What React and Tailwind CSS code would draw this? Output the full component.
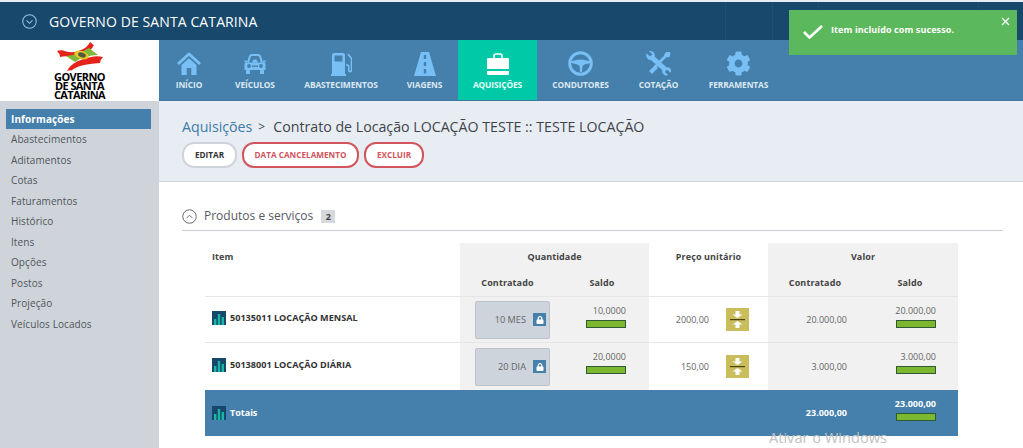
import React from "react";
import { FaCog, FaLock } from "react-icons/fa";

const ICON = "#78bff5";

function Home() {
  return (
    <svg width="24" height="24" viewBox="0 0 24 24">
      <path d="M1 12 12 2l11 10" fill="none" stroke={ICON} strokeWidth="3" strokeLinejoin="round" />
      <path d="M4.5 13 12 6.2 19.5 13v10h-5.2v-7H9.7v7H4.5z" fill={ICON} />
    </svg>
  );
}
function Car() {
  return (
    <svg width="24" height="22" viewBox="0 0 24 22">
      <path d="M5 9.5 7 3.2C7.3 2.4 8 2 9 2h6c1 0 1.7.4 2 1.2l2 6.3" fill="none" stroke={ICON} strokeWidth="2" />
      <path d="M9 9.5 10.5 6.5h3L15 9.5z" fill={ICON} />
      <path d="M0.5 7.5h3l1 2H4.2L2.6 9.5zM23.5 7.5h-3l-1 2h.3l1.6 0z" fill={ICON} />
      <path d="M3 9.5h18c1 0 1.5.7 1.5 1.5v6H1.5v-6c0-.8.5-1.5 1.5-1.5z" fill={ICON} />
      <circle cx="6" cy="13" r="1.9" fill="#457fab" />
      <circle cx="18" cy="13" r="1.9" fill="#457fab" />
      <rect x="9" y="12.5" width="6" height="1.4" fill="#457fab" />
      <rect x="3" y="17" width="4" height="4" rx=".6" fill={ICON} />
      <rect x="17" y="17" width="4" height="4" rx=".6" fill={ICON} />
    </svg>
  );
}
function Gas() {
  return (
    <svg width="21" height="24" viewBox="0 0 21 24">
      <path d="M1 22V3a2 2 0 0 1 2-2h9a2 2 0 0 1 2 2v19zM0 22h15v2H0z" fill={ICON} />
      <rect x="3.5" y="3.5" width="8" height="6" fill="#457fab" />
      <path d="M15 13h1.5a1.2 1.2 0 0 1 1.2 1.2v4a1.4 1.4 0 0 0 2.8 0V6.5L17 2" fill="none" stroke={ICON} strokeWidth="1.6" />
    </svg>
  );
}
function Tools() {
  return (
    <svg width="25" height="25" viewBox="0 0 25 25">
      <path d="M22 2.5 9 16" stroke={ICON} strokeWidth="2.6" fill="none" />
      <path d="M20 1h3.5l1 1-1 4-2.5.6-2.8-2.8z" fill={ICON} />
      <path d="M10.5 15.5 4.5 21.5" stroke={ICON} strokeWidth="4" />
      <path d="M0.6 2.2 4.2 5.6 6.4 3.2 3 .2C6.5-.6 9.5 2 8.8 5.8l12 10.6c3.5-.6 5.2 3.2 3.8 5.4l-3.6-3.2-2.2 2.4 3.4 3.1c-3.4 1.2-6.7-1.4-6-5.2L4.6 8.8C1.8 9.5-.6 6 .6 2.2z" fill={ICON} />
    </svg>
  );
}
function Road() {
  return (
    <svg width="24" height="24" viewBox="0 0 24 24">
      <path d="M8 0h8l7 24H1z" fill={ICON} />
      <rect x="10.8" y="3" width="2.4" height="4" fill="#457fab" />
      <rect x="10.8" y="10" width="2.4" height="4" fill="#457fab" />
      <rect x="10.8" y="17" width="2.4" height="4.5" fill="#457fab" />
    </svg>
  );
}
function Bag() {
  return (
    <svg width="24" height="24" viewBox="0 0 24 24">
      <path d="M8 6V4a2 2 0 0 1 2-2h4a2 2 0 0 1 2 2v2" fill="none" stroke="#fff" strokeWidth="1.6" />
      <path d="M2 6h20a1 1 0 0 1 1 1v10H1V7a1 1 0 0 1 1-1z" fill="#fff" />
      <path d="M1 19h22v3a1 1 0 0 1-1 1H2a1 1 0 0 1-1-1z" fill="#fff" />
    </svg>
  );
}
function Wheel() {
  return (
    <svg width="25" height="25" viewBox="0 0 25 25">
      <circle cx="12.5" cy="12.5" r="10.8" fill="none" stroke={ICON} strokeWidth="3" />
      <path d="M2.5 10.5c6-2.4 14-2.4 20 0v1.5l-6 1.5-2 1.5-.5 6h-2l-.5-6-2-1.5-6-1.5z" fill={ICON} />
    </svg>
  );
}
function Chart() {
  return (
    <svg width="14" height="14" viewBox="0 0 14 14" className="shrink-0">
      <rect width="14" height="14" fill="#17486b" />
      <rect x="2" y="8" width="2.4" height="6" fill="#19b5a5" />
      <rect x="5.8" y="3" width="2.4" height="11" fill="#19b5a5" />
      <rect x="9.6" y="6" width="2.4" height="8" fill="#19b5a5" />
    </svg>
  );
}
function Logo() {
  return (
    <svg width="46" height="29" viewBox="0 0 46 29">
      <path d="M0 9 Q4 7.5 9 9.5 Q17 11.5 24 8 Q31 5 33 0 L35 1.5 Q36 3 37 3 Q34 9 27 12.5 Q20 15.5 12 14.5 Q7 14 3 15 Q3 11.5 0 9Z" fill="#e5231b" />
      <path d="M46 15 Q42 14 37 14.5 Q28 15.5 20 19.5 Q13 23 10 29 Q13 28 14.5 28.5 Q19 24.5 27 23 Q35 21.5 43 21 Q43 18 46 15Z" fill="#e5231b" />
      <path d="M9 14 Q20 13 32 6 L41 13 Q28 13 18 20 Z" fill="#7fb83a" />
      <ellipse cx="24.5" cy="13" rx="7.5" ry="4" fill="#e8c52a" transform="rotate(18 24.5 13)" />
      <ellipse cx="25" cy="13" rx="4" ry="2.4" fill="#4f5a3a" transform="rotate(18 25 13)" />
    </svg>
  );
}
function Bar() {
  return <div className="w-[40px] h-[8px] bg-[#7cb82f] border border-[#2f5a35]" />;
}
function QtyBox({ text }) {
  return (
    <div className="w-[75px] h-[38px] bg-[#ced4dc] border border-[#bcc3cb] rounded-[2px] flex items-center justify-end gap-[7px] pr-[3px] text-[9.2px] text-[#666]">
      <span>{text}</span>
      <span className="w-[13px] h-[13px] bg-[#457fab] flex items-center justify-center text-white">
        <FaLock size={8} />
      </span>
    </div>
  );
}
function Split() {
  return (
    <div className="w-[23px] h-[23px] bg-[#c9bd5c] flex flex-col items-center justify-center">
      <svg width="23" height="23" viewBox="0 0 23 23">
        <path d="M9.5 3h4v3.4h3L11.5 10l-5-3.6h3z" fill="#fff" />
        <rect x="4" y="11" width="15" height="1.2" fill="#4a4410" />
        <path d="M9.5 20h4v-3.4h3L11.5 13l-5 3.6h3z" fill="#fff" />
      </svg>
    </div>
  );
}

const navItems = [
  ["INÍCIO", <Home />, "w-[60px]"],
  ["VEÍCULOS", <Car />, "w-[72px]"],
  ["ABASTECIMENTOS", <Gas />, "w-[100px]"],
  ["VIAGENS", <Road />, "w-[67px]"],
  ["AQUISIÇÕES", <Bag />, "w-[79px]"],
  ["CONDUTORES", <Wheel />, "w-[87px]"],
  ["COTAÇÃO", <Tools />, "w-[69px]"],
  ["FERRAMENTAS", <FaCog size={25} />, "w-[91px]"],
];
const side = ["Abastecimentos", "Aditamentos", "Cotas", "Faturamentos", "Histórico", "Itens", "Opções", "Postos", "Projeção", "Veículos Locados"];

export default function App() {
  return (
    <div className="relative w-[1023px] h-[448px] overflow-hidden bg-white flex flex-col font-['Open_Sans',sans-serif]">
      <div className="h-[2px] bg-[#e9eef3] shrink-0" />
      <header className="h-[38px] shrink-0 bg-[#18486b] flex items-center pl-[22px] gap-[12px] relative">
        <svg width="15" height="15" viewBox="0 0 16 16" fill="none" stroke="#8fc4ee" strokeWidth="1.1">
          <circle cx="8" cy="8" r="7.2" />
          <path d="M4.8 6.8 8 10l3.2-3.2" />
        </svg>
        <span className="text-white text-[14px] tracking-[0.1px]">GOVERNO DE SANTA CATARINA</span>
        <div className="ml-auto flex h-full mr-[44px]">
          <div className="w-[47px] border-l border-[#234f71]" />
          <div className="w-[46px] border-l border-[#234f71]" />
          <div className="w-[161px] border-l border-[#234f71] border-r" />
        </div>
      </header>
      <div className="h-[61px] shrink-0 flex">
        <div className="w-[159px] bg-white flex flex-col items-center pt-[2px]">
          <Logo />
          <div className="text-black font-bold text-[11px] leading-[9px] text-center tracking-[-0.6px] mt-[1px]">
            GOVERNO<br />DE SANTA<br />CATARINA
          </div>
        </div>
        <nav className="flex-1 bg-[#457fab] flex border-b border-[#3f769f]">
          {navItems.map(([label, icon, w]) => {
            const active = label === "AQUISIÇÕES";
            return (
              <div key={label} className={`${w} flex flex-col items-center pt-[10px] ${active ? "bg-[#00c9a7] text-white" : "text-[#78bff5]"}`}>
                <div className="h-[27px] flex items-center justify-center">{icon}</div>
                <span className={`mt-[2px] text-[8.4px] font-bold tracking-[-0.1px] whitespace-nowrap ${active ? "text-[#e6fffa]" : "text-[#dbe8f2]"}`}>{label}</span>
              </div>
            );
          })}
        </nav>
      </div>
      <div className="flex-1 flex min-h-0">
        <aside className="w-[159px] shrink-0 bg-[#ced4da] pt-[8px] pl-[6px]">
          <div className="w-[145px] h-[20px] bg-[#457fab] text-white font-bold text-[10px] pl-[5px] flex items-center tracking-[0.1px]">Informações</div>
          <ul className="mt-[0.5px] pl-[5px]">
            {side.map((s) => (
              <li key={s} className="h-[20.5px] flex items-center text-[10px] text-[#4f555b] tracking-[0.08px]">{s}</li>
            ))}
          </ul>
        </aside>
        <main className="flex-1 min-w-0 flex flex-col">
          <div className="h-[81px] shrink-0 bg-[#e8edf4] border-b border-[#cfd4da] pl-[23px] pt-[16px]">
            <div className="flex items-center gap-[5px] text-[14.2px] leading-[20px] text-[#3f444a]">
              <span className="text-[#3d7ba8]">Aquisições</span>
              <span className="text-[12px] ml-[1px] mr-[3px]">&gt;</span>
              <span>Contrato de Locação LOCAÇÃO TESTE :: TESTE LOCAÇÃO</span>
            </div>
            <div className="flex gap-[5px] mt-[5px]">
              <div className="h-[26px] w-[55px] rounded-[12px] bg-white border-2 border-[#cfd4da] flex items-center justify-center text-[8.2px] font-bold text-[#333]">EDITAR</div>
              <div className="h-[26px] w-[117px] rounded-[12px] bg-white border-2 border-[#d2555d] flex items-center justify-center text-[8.2px] font-bold text-[#d2555d]">DATA CANCELAMENTO</div>
              <div className="h-[26px] w-[60px] rounded-[12px] bg-white border-2 border-[#d2555d] flex items-center justify-center text-[8.2px] font-bold text-[#d2555d]">EXCLUIR</div>
            </div>
          </div>
          <div className="pl-[23px] pr-[20px]">
            <div className="h-[49px] border-b border-[#c9ced3] flex items-end pb-[6px] gap-[7px]">
              <svg width="15" height="15" viewBox="0 0 16 16" fill="none" stroke="#5c6268" strokeWidth="1">
                <circle cx="8" cy="8" r="7.2" />
                <path d="M4.8 9.8 8 6.6l3.2 3.2" />
              </svg>
              <span className="text-[12px] leading-[16px] text-[#555b61]">Produtos e serviços</span>
              <span className="ml-[1px] w-[14px] h-[13px] mb-[1px] bg-[#d5d9dd] text-[9px] font-bold text-[#444] flex items-center justify-center">2</span>
            </div>
          </div>
          <div className="ml-[46px] mt-[12px] w-[753px] text-[9px]">
            <div className="grid grid-cols-[255px_95px_94px_119px_94px_96px] grid-rows-[27px_26px] border-b border-[#e4e6e8] font-bold text-[#444] text-[9px] tracking-[0.1px]">
              <div className="pl-[7px] pt-[7px]">Item</div>
              <div className="col-span-2 bg-[#f1f1f1] text-center pt-[7px]">Quantidade</div>
              <div className="text-center pt-[7px]">Preço unitário</div>
              <div className="col-span-2 bg-[#f1f1f1] text-center pt-[7px]">Valor</div>
              <div />
              <div className="bg-[#f1f1f1] text-center pt-[6px]">Contratado</div>
              <div className="bg-[#f1f1f1] text-center pt-[6px]">Saldo</div>
              <div />
              <div className="bg-[#f1f1f1] text-center pt-[6px]">Contratado</div>
              <div className="bg-[#f1f1f1] text-center pt-[6px]">Saldo</div>
            </div>
            {[
              ["50135011 LOCAÇÃO MENSAL", "10 MES", "10,0000", "2000,00", "20.000,00", "20.000,00"],
              ["50138001 LOCAÇÃO DIÁRIA", "20 DIA", "20,0000", "150,00", "3.000,00", "3.000,00"],
            ].map((r, i) => (
              <div key={i} className={`grid grid-cols-[255px_95px_94px_119px_94px_96px] text-[#666] ${i === 0 ? "h-[46px] border-b border-[#e4e6e8]" : "h-[47px]"}`}>
                <div className="pl-[7px] pb-[3px] flex items-center gap-[4px] font-bold text-[9.1px] text-[#333]">
                  <Chart />
                  <span>{r[0]}</span>
                </div>
                <div className="bg-[#f1f1f1] flex items-center pl-[15px]"><QtyBox text={r[1]} /></div>
                <div className="bg-[#f1f1f1] flex flex-col items-end pr-[23px] pt-[7px] gap-[2px]">
                  <span className="leading-[14px]">{r[2]}</span>
                  <Bar />
                </div>
                <div className="flex items-center pl-[26px]">
                  <span className="w-[34px] text-right">{r[3]}</span>
                  <span className="ml-[17px]"><Split /></span>
                </div>
                <div className="bg-[#f1f1f1] flex items-center justify-end pr-[15px]">{r[4]}</div>
                <div className="bg-[#f1f1f1] flex flex-col items-end pr-[22px] pt-[7px] gap-[2px]">
                  <span className="leading-[14px]">{r[5]}</span>
                  <Bar />
                </div>
              </div>
            ))}
            <div className="grid grid-cols-[255px_95px_94px_119px_94px_96px] h-[46px] bg-[#457fab] text-white font-bold text-[9px]">
              <div className="pl-[7px] flex items-center gap-[4px]">
                <Chart />
                <span>Totais</span>
              </div>
              <div />
              <div />
              <div />
              <div className="flex items-center justify-end pr-[15px]">23.000,00</div>
              <div className="flex flex-col items-end pr-[22px] pt-[7px] gap-[2px]">
                <span className="leading-[14px]">23.000,00</span>
                <Bar />
              </div>
            </div>
          </div>
        </main>
      </div>

      <div className="absolute left-[789px] top-[10px] w-[228px] h-[45px] bg-[#5cb85c] text-white">
        <svg width="20" height="14" viewBox="0 0 20 14" className="absolute left-[14px] top-[15px]" fill="none" stroke="#fff" strokeWidth="2.6">
          <path d="M1 7l5.5 5.5L19 1" />
        </svg>
        <span className="absolute left-[42px] top-[13px] text-[9px] font-bold leading-[14px] tracking-[0.1px]">Item incluído com sucesso.</span>
        <svg width="9" height="9" viewBox="0 0 9 9" className="absolute right-[7px] top-[7px]" stroke="#fff" strokeWidth="1.3">
          <path d="M1 1l7 7M8 1 1 8" />
        </svg>
      </div>
      <span className="absolute left-[769px] top-[428px] text-[14.6px] leading-[18px] text-[#c2c2c2]">Ativar o Windows</span>
    </div>
  );
}
